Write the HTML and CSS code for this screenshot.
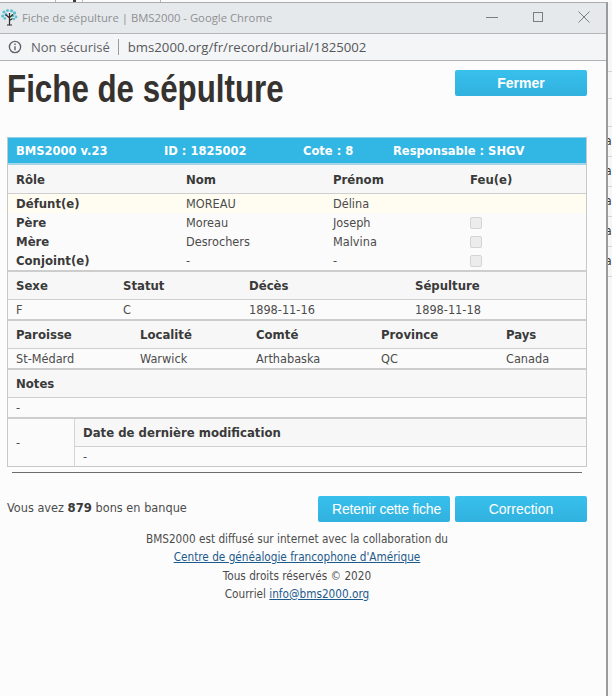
FILE: index.html
```html
<!DOCTYPE html>
<html lang="fr">
<head>
<meta charset="utf-8">
<title>Fiche de sépulture | BMS2000</title>
<link rel="stylesheet" href="styles.css">
</head>
<body>
<div class="desktop">
  <div class="topstrip">
    <span class="tick t1"></span><span class="tick t2"></span><span class="tick t3"></span><span class="tick t4"></span>
  </div>
  <div class="desk-row">
    <main class="window">
      <header class="titlebar">
        <svg class="favicon" viewBox="0 0 18 18" aria-hidden="true">
          <g fill="#5dbfcf">
            <circle cx="4" cy="4" r="1.6"/><circle cx="7.5" cy="2.6" r="1.5"/><circle cx="11.5" cy="2.8" r="1.6"/><circle cx="14.5" cy="5" r="1.7"/>
            <circle cx="2.6" cy="8" r="1.6"/><circle cx="6" cy="6.6" r="1.5"/><circle cx="12.6" cy="7.6" r="1.6"/><circle cx="16" cy="9" r="1.4"/>
            <circle cx="4.8" cy="10.4" r="1.3"/><circle cx="14" cy="11" r="1.2"/>
          </g>
          <path d="M9.5 17V5M9.5 10 5.5 6.5M9.5 9.5l3.5-3M9.5 12.5l3-2" stroke="#2f2b28" stroke-width="1.2" fill="none"/>
          <path d="M7 17h5" stroke="#2f2b28" stroke-width="1" fill="none"/>
        </svg>
        <span class="wintitle">Fiche de sépulture | BMS2000 - Google Chrome</span>
        <div class="winctl">
          <svg viewBox="0 0 12 12" aria-hidden="true"><path d="M0 6.5h12" stroke="#7b7e81" fill="none"/></svg>
          <svg viewBox="0 0 12 12" aria-hidden="true"><rect x="1.5" y="1.5" width="9" height="9" stroke="#7b7e81" fill="none"/></svg>
          <svg viewBox="0 0 12 12" aria-hidden="true"><path d="M.5.5l11 11M11.5.5l-11 11" stroke="#7b7e81" fill="none"/></svg>
        </div>
      </header>
      <div class="addressbar">
        <svg class="info" viewBox="0 0 14 14" aria-hidden="true">
          <circle cx="7" cy="7" r="5.6" stroke="#5f6368" stroke-width="1.4" fill="none"/>
          <path d="M7 6.2v4M7 3.6v1.5" stroke="#5f6368" stroke-width="1.4" fill="none"/>
        </svg>
        <span class="insecure">Non sécurisé</span>
        <span class="urlsep"></span>
        <span class="url">bms2000.org/fr/record/burial/1825002</span>
      </div>
      <div class="page">
        <div class="headline">
          <h1>Fiche de sépulture</h1>
          <button class="btn btn-bold btn-close">Fermer</button>
        </div>
        <section class="record">
          <div class="band">
            <span class="b1">BMS2000 v.23</span>
            <span class="b2">ID : 1825002</span>
            <span class="b3">Cote : 8</span>
            <span class="b4">Responsable : SHGV</span>
          </div>

          <div class="grid people head">
            <b>Rôle</b><b>Nom</b><b>Prénom</b><b>Feu(e)</b>
          </div>
          <div class="people-body">
            <div class="grid people row hl"><b>Défunt(e)</b><span>MOREAU</span><span>Délina</span><span></span></div>
            <div class="grid people row"><b>Père</b><span>Moreau</span><span>Joseph</span><span class="box"></span></div>
            <div class="grid people row"><b>Mère</b><span>Desrochers</span><span>Malvina</span><span class="box"></span></div>
            <div class="grid people row"><b>Conjoint(e)</b><span>-</span><span>-</span><span class="box"></span></div>
          </div>

          <div class="grid vital head thick">
            <b>Sexe</b><b>Statut</b><b>Décès</b><b>Sépulture</b>
          </div>
          <div class="grid vital cell">
            <span>F</span><span>C</span><span>1898-11-16</span><span>1898-11-18</span>
          </div>

          <div class="grid place head thick">
            <b>Paroisse</b><b>Localité</b><b>Comté</b><b>Province</b><b>Pays</b>
          </div>
          <div class="grid place cell">
            <span>St-Médard</span><span>Warwick</span><span>Arthabaska</span><span>QC</span><span>Canada</span>
          </div>

          <div class="grid head thick"><b>Notes</b></div>
          <div class="grid cell"><span>-</span></div>

          <div class="lastrow">
            <div class="lastleft">-</div>
            <div class="lastright">
              <div class="head mod"><b>Date de dernière modification</b></div>
              <div class="cell mod-val">-</div>
            </div>
          </div>
        </section>
        <hr class="rule">
        <div class="actions">
          <p class="credits">Vous avez <b>879</b> bons en banque</p>
          <div class="actbtns">
            <button class="btn btn-act btn-keep">Retenir cette fiche</button>
            <button class="btn btn-act">Correction</button>
          </div>
        </div>
        <footer class="foot">
          <p>BMS2000 est diffusé sur internet avec la collaboration du</p>
          <p><a href="#">Centre de généalogie francophone d'Amérique</a></p>
          <p>Tous droits réservés © 2020</p>
          <p>Courriel <a href="#">info@bms2000.org</a></p>
        </footer>
      </div>
    </main>
    <aside class="behind">
      <span class="r1"></span><span class="r2"></span><span class="r3"></span><span>a</span><span>a</span><span>a</span><span>a</span><span>a</span>
    </aside>
  </div>
</div>
</body>
</html>
```

FILE: styles.css
```css
* { box-sizing: border-box; }
html, body { margin: 0; padding: 0; }
body {
  width: 612px;
  height: 696px;
  overflow: hidden;
  background: #fff;
  font-family: "DejaVu Sans Condensed", "DejaVu Sans", sans-serif;
  font-size: 12.6px;
  color: #4c4c4c;
}
.desktop { width: 612px; height: 696px; display: flex; flex-direction: column; }
.topstrip { height: 2px; background: #fbfbfb; display: flex; flex: none; }
.tick { display: block; width: 1px; background: #b5b5b5; }
.t1 { margin-left: 55px; }
.t2 { margin-left: 17px; width: 3px; background: #3c3c3c; }
.t3 { margin-left: 6px; }
.t4 { margin-left: 77px; }
.desk-row { flex: 1; display: flex; min-height: 0; }
.window {
  width: 608px;
  flex: none;
  display: flex;
  flex-direction: column;
  border-top: 1px solid #a9adb0;
  border-right: 2px solid #9b9b9b;
  background: #fcfcfc;
}
.titlebar {
  height: 31px;
  background: #e6e9ec;
  border-bottom: 1px solid #b4b7ba;
  display: flex;
  align-items: center;
  flex: none;
}
.favicon { width: 18px; height: 18px; flex: none; margin-top: -2px; }
.wintitle { margin-left: 4px; margin-top: -2px; font: 11.3px "Open Sans", sans-serif; color: #8d9092; }
.winctl { margin-left: auto; display: flex; gap: 34px; margin-right: 16px; margin-top: -2px; }
.winctl svg { width: 12px; height: 12px; display: block; }
.addressbar {
  height: 27px;
  flex: none;
  background: #f4f5f6;
  border-bottom: 1px solid #b0b2b4;
  display: flex;
  align-items: center;
  padding-left: 8px;
}
.info { width: 14px; height: 14px; flex: none; }
.insecure { margin-left: 9px; font: 13px "Open Sans", sans-serif; color: #5f6368; }
.urlsep { width: 1px; height: 16px; background: #9a9c9e; margin: 0 9px 0 8px; }
.url { font: 13.2px "Open Sans", sans-serif; color: #55585b; }
.page { flex: 1; background: #fcfcfc; padding-left: 7px; min-height: 0; }
.headline { height: 76px; display: flex; align-items: flex-start; justify-content: space-between; padding-right: 19px; }
h1 {
  margin: 5px 0 0;
  font: bold 39px/46px "Liberation Sans", sans-serif;
  color: #35322f;
  transform: scaleX(.803);
  transform-origin: left center;
}
.btn {
  border: 0;
  border-radius: 2px;
  background: linear-gradient(#38c0ec, #31b1df);
  color: #fff;
  padding: 0;
  display: block;
}
.btn-bold { font: bold 14px "Liberation Sans", sans-serif; }
.btn-close { width: 132px; height: 26px; margin-top: 9px; }
.record {
  width: 580px;
  border: 1px solid #c8c8c8;
  border-top: 0;
  background: #fbfbfb;
}
.band {
  height: 28px;
  background: #32b6e3;
  border-top: 1px solid #8fcfe8;
  border-bottom: 2px solid #a5d5e6;
  color: #fff;
  font: bold 12.8px "DejaVu Sans Condensed", "DejaVu Sans", sans-serif;
  display: flex;
  align-items: center;
  padding-left: 8px;
}
.band span { flex: none; }
.b1 { width: 148px; }
.b2 { width: 139px; }
.b3 { width: 90px; }
.grid { display: grid; padding: 0 8px; align-items: center; }
.grid b, .mod b { font-size: 13px; font-weight: bold; color: #3a3a3a; }
.people { grid-template-columns: 170px 147px 137px 1fr; }
.vital { grid-template-columns: 107px 126px 166px 1fr; }
.place { grid-template-columns: 124px 116px 125px 125px 1fr; }
.head { background: #f7f7f7; }
.people.head { height: 29px; border-bottom: 1px solid #cfcfcf; }
.people-body { height: 76px; }
.row { height: 19px; }
.hl { background: #fffdf2; }
.box {
  width: 12px; height: 12px;
  background: #ececec;
  border: 1px solid #d4d4d4;
  border-radius: 2px;
  display: block;
}
.thick { border-top: 2px solid #cdcdcd; height: 30px; border-bottom: 1px solid #cfcfcf; }
.cell { height: 19px; }
.lastrow { display: flex; height: 49px; border-top: 2px solid #cdcdcd; }
.lastleft { width: 67px; padding-left: 8px; display: flex; align-items: center; border-right: 1px solid #d4d4d4; }
.lastright { flex: 1; display: flex; flex-direction: column; }
.mod { height: 28px; padding: 0 8px; display: flex; align-items: center; border-bottom: 1px solid #cfcfcf; }
.mod-val { padding: 0 8px; display: flex; align-items: center; }
.rule { width: 570px; margin: 5px 0 0 5px; border: 0; border-top: 1px solid #6d6d6d; height: 0; }
.actions { display: flex; justify-content: space-between; padding-right: 19px; margin-top: 23px; }
.credits { margin: 4px 0 0; }
.credits b { font-size: 13px; font-weight: bold; color: #3a3a3a; }
.actbtns { display: flex; gap: 5px; }
.btn-act { width: 132px; height: 26px; font: 14px "Liberation Sans", sans-serif; }
.btn-keep { letter-spacing: -.2px; padding-left: 5px; }
.foot { text-align: center; margin-top: 8px; width: 580px; font-size: 11.7px; }
.foot p { margin: 0; line-height: 18.3px; }
.foot a { color: #1d5a8c; text-decoration: underline; }
.behind {
  flex: 1;
  min-width: 0;
  overflow: hidden;
  display: flex;
  flex-direction: column;
  padding-top: 40px;
  background: #f7f7f7;
}
.behind span {
  flex: none;
  height: 30px;
  border-bottom: 1px solid #d2d2d2;
  font-size: 12px;
  line-height: 29px;
  text-indent: -3px;
  white-space: nowrap;
  color: #333;
}
.behind .r2 { height: 27px; }
.behind .r3 { height: 28px; }
```
